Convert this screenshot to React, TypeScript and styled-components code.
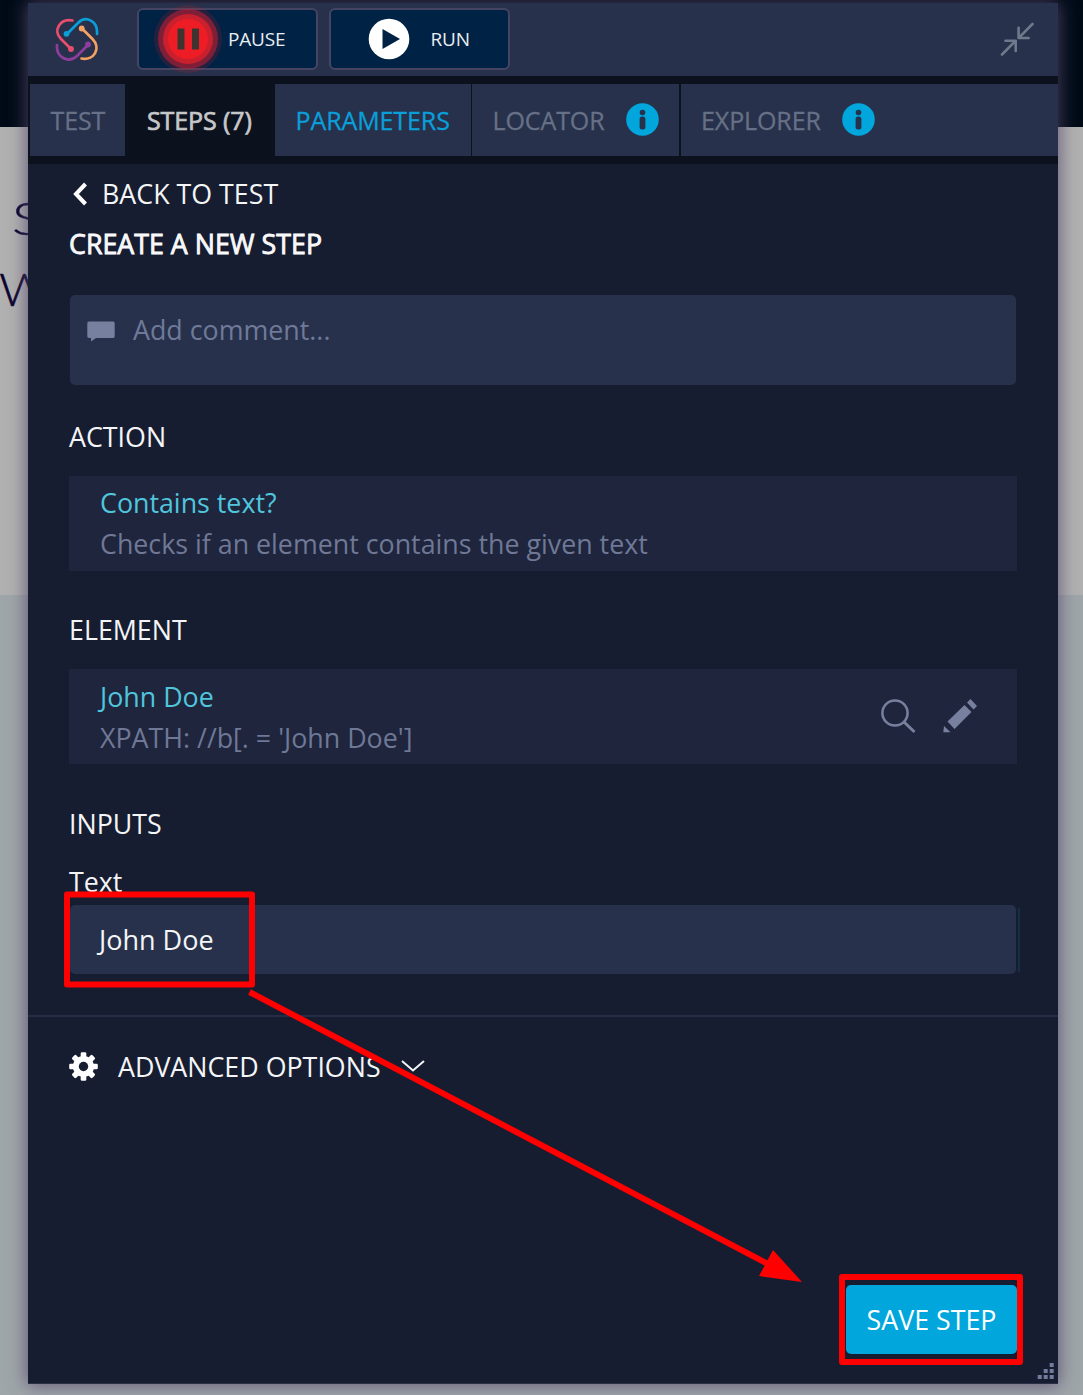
import React from "react";
import styled, { createGlobalStyle } from "styled-components";

const GlobalStyle = createGlobalStyle`
  *, *::before, *::after { box-sizing: border-box; }
  body {
    margin: 0;
    overflow: hidden;
    font-family: "Open Sans", "Noto Sans", sans-serif;
    background: #9fa6a9;
  }
  button { font-family: inherit; cursor: pointer; }
`;

const Page = styled.div`
  position: relative;
  display: grid;
  grid-template: 1395px / 1083px;
  width: 1083px;
  height: 1395px;
  overflow: hidden;
`;

const Backdrop = styled.div`
  grid-area: 1 / 1;
  display: grid;
  grid-template-rows: 127px 468px 1fr;
`;

const DarkBand = styled.div`
  background: #000b17;
`;

const GreyBand = styled.div`
  background: #b1b1b1;
  padding-top: 55px;
`;

const LowerBand = styled.div`
  background: #9fa6a9;
`;

const Headline = styled.p<{ $indent: number; $stretch: number }>`
  margin: 0 0 0 ${(p) => p.$indent}px;
  height: 71px;
  line-height: 71px;
  font-family: Lato, sans-serif;
  font-weight: 300;
  font-size: 46px;
  color: #0b0530;
  white-space: nowrap;
  -webkit-text-stroke: 0.4px #0b0530;
  transform: scaleX(${(p) => p.$stretch});
  transform-origin: left center;
`;

const Panel = styled.main`
  grid-area: 1 / 1;
  z-index: 1;
  display: flex;
  flex-direction: column;
  width: 1030px;
  height: 1381px;
  margin: 3px 0 0 28px;
  background: #171d30;
  border-bottom: 1px solid #2b3048;
  box-shadow: 0 0 17px 1px rgba(86, 70, 108, 0.85);
`;

const Header = styled.header`
  display: flex;
  align-items: center;
  height: 73px;
  flex: none;
  padding: 0 24px 2px 26px;
  background: #27314b;
`;

const LogoSlot = styled.div`
  display: flex;
  width: 46px;
  height: 46px;
  margin-right: 37px;
`;

const HeaderButton = styled.button<{ $iconPad: number; $gap: number }>`
  display: flex;
  align-items: center;
  gap: ${(p) => p.$gap}px;
  width: 181px;
  height: 62px;
  margin: 0 11px 0 0;
  padding: 0 0 0 ${(p) => p.$iconPad}px;
  border: 2px solid #454563;
  border-radius: 6px;
  background: #002244;
  color: #e9edf2;
  font-size: 19px;
  letter-spacing: -0.2px;
`;

const Collapse = styled.div`
  display: flex;
  margin-left: auto;
`;

const Tabs = styled.nav`
  display: flex;
  gap: 1.5px;
  flex: none;
  height: 88px;
  padding: 8px 0 8px 2px;
  background: #0c111e;
`;

const Tab = styled.div<{ $w?: number; $color?: string; $active?: boolean }>`
  display: flex;
  align-items: center;
  gap: 21px;
  ${(p) => (p.$w ? `width: ${p.$w}px;` : "flex: 1;")}
  padding-left: 20.5px;
  background: ${(p) => (p.$active ? "#0c111e" : "#27314b")};
  color: ${(p) => p.$color ?? "#667086"};
  font-size: 25px;
  letter-spacing: -0.1px;
  white-space: nowrap;
  -webkit-text-stroke: ${(p) => (p.$active ? 0.7 : 0.3)}px currentColor;
  svg { margin-bottom: 2px; }
`;

const Body = styled.section`
  display: flex;
  flex-direction: column;
  padding: 5px 41px 0 41px;
  height: 853px;
  flex: none;
  border-bottom: 2px solid #242d46;
`;

const Line = styled.div<{ $h: number; $mt?: number; $strong?: boolean }>`
  display: flex;
  align-items: center;
  flex: none;
  height: ${(p) => p.$h}px;
  margin-top: ${(p) => p.$mt ?? 0}px;
  font-size: 26.8px;
  line-height: ${(p) => p.$h}px;
  color: #f4f5f7;
  white-space: nowrap;
  ${(p) => p.$strong && "-webkit-text-stroke: 0.8px #fff;"}
`;

const BackIcon = styled.span`
  display: flex;
  width: 33px;
  padding-left: 4px;
`;

const Comment = styled.div`
  display: flex;
  align-items: flex-start;
  gap: 18px;
  flex: none;
  height: 90px;
  margin: 26px 1px 0 1px;
  padding: 15px 0 0 17px;
  border-radius: 5px;
  background: #27314b;
  color: #6f7a99;
  font-size: 26.8px;
  line-height: 40px;
  svg { margin-top: 11px; }
`;

const Card = styled.div`
  display: flex;
  align-items: center;
  justify-content: space-between;
  flex: none;
  height: 95px;
  margin-top: 14px;
  padding: 0 39px 0 31px;
  background: #1e253d;
`;

const CardText = styled.div<{ $nudge?: number }>`
  display: flex;
  flex-direction: column;
  padding-bottom: ${(p) => p.$nudge ?? 1}px;
`;

const CardTitle = styled.span`
  font-size: 26.8px;
  line-height: 41px;
  color: #50c5dc;
`;

const CardNote = styled.span`
  font-size: 26.8px;
  line-height: 41px;
  color: #6f7895;
`;

const CardIcons = styled.div`
  display: flex;
  gap: 26px;
  padding-bottom: 2px;
`;

const InputRow = styled.div`
  display: flex;
  align-items: center;
  gap: 2px;
  margin: 3px -3px 0 1px;
`;

const TextInput = styled.div`
  flex: 1;
  height: 69px;
  padding-left: 29px;
  border-radius: 5px;
  background: #27314b;
  color: #f4f5f7;
  font-size: 27px;
  line-height: 69px;
`;

const Caret = styled.span`
  width: 2px;
  height: 64px;
  background: #143048;
`;

const Advanced = styled.div`
  display: flex;
  align-items: center;
  height: 98px;
  flex: none;
  padding-left: 41px;
  font-size: 26.8px;
  color: #f4f5f7;
`;

const AdvancedLabel = styled.span`
  margin: 0 20px;
`;

const Footer = styled.footer`
  display: flex;
  justify-content: flex-end;
  align-items: flex-end;
  flex: 1;
  padding: 0 3px 3px 0;
`;

const SaveButton = styled.button`
  width: 171px;
  height: 69px;
  margin: 0 37px 26px 0;
  padding: 0;
  border: 0;
  border-radius: 5px;
  background: #00a6dc;
  color: #fff;
  font-size: 26.8px;
`;

const Annotations = styled.svg`
  position: absolute;
  inset: 0;
  z-index: 2;
  pointer-events: none;
`;

const Logo = () => (
  <svg width="46" height="46" viewBox="0 0 46 46" fill="none" strokeWidth="2.7" strokeLinecap="round">
    <path d="M18.5 4.5C6 2 -1.5 15 7 23L17 33" stroke="#e94f6c" />
    <path d="M13 18L24 7C32-1 44 5 43 18" stroke="#0a9fd9" />
    <path d="M28 12.5L38.500 23C47.500 32 40 45 27.500 42.500" stroke="#f4a261" />
    <path d="M34 29L23 40C14 48 2 41 3 29" stroke="#8e3d9c" />
    <circle cx="17" cy="33" r="2.900" fill="#e94f6c" />
    <circle cx="12.500" cy="17.800" r="2.900" fill="#0a9fd9" />
    <circle cx="27.700" cy="12.500" r="2.900" fill="#f4a261" />
    <circle cx="34" cy="28.500" r="2.900" fill="#8e3d9c" />
  </svg>
);

const PauseSvg = styled.svg`
  flex: none;
`;

const PauseIcon = () => (
  <PauseSvg width="68" height="68" viewBox="0 0 68 68">
    <circle cx="34" cy="34" r="34" fill="#e01c2c" opacity=".16" />
    <circle cx="34" cy="34" r="30" fill="#d71e2d" opacity=".5" />
    <circle cx="34" cy="34" r="25" fill="#c9202d" />
    <circle cx="34" cy="34" r="20" fill="#ee1c25" />
    <path d="M23.500 23.500h7v21h-7zM38 23.500h7v21h-7z" fill="#3d342f" />
  </PauseSvg>
);

const PlayIcon = () => (
  <svg width="42" height="42" viewBox="0 0 42 42">
    <circle cx="21" cy="21" r="20.300" fill="#fff" />
    <path d="M14.500 11v20L32 21z" fill="#002244" />
  </svg>
);

const InfoIcon = () => (
  <svg width="33" height="33" viewBox="0 0 33 33">
    <circle cx="16.500" cy="16.500" r="16.300" fill="#00a6dc" />
    <circle cx="16.500" cy="9.500" r="2.800" fill="#27314b" />
    <rect x="13.600" y="13.500" width="5.800" height="13" rx="2.500" fill="#27314b" />
  </svg>
);

const CollapseIcon = () => (
  <svg width="34" height="34" viewBox="0 0 34 34" fill="none" stroke="#70788b" strokeWidth="2.600" strokeLinecap="round" strokeLinejoin="round">
    <path d="M2 32.500L15.500 18.800M5.500 18.800h10.200v10.200M32.500 2L18.800 15.800M18.600 5.800V16h10" />
  </svg>
);

const SearchIcon = () => (
  <svg width="36" height="36" viewBox="0 0 36 36" fill="none" stroke="#77819f" strokeWidth="2.500">
    <circle cx="15" cy="15" r="12.600" />
    <path d="M24 24l10.500 10" strokeWidth="3" />
  </svg>
);

const PencilIcon = () => (
  <svg width="36" height="36" viewBox="0 0 36 36" fill="#77819f">
    <path d="M28.500 1l6.500 7-3.500 3.500L25 4.500zM22.500 7l7 7L12.500 31 5.500 23.500zM2 28l6.500 6.300H1.300z" />
  </svg>
);

const GearIcon = () => (
  <svg width="29" height="29" viewBox="-14.500 -14.500 29 29">
    {[0, 45, 90, 135].map((a) => (
      <rect key={a} x="-2.800" y="-14.300" width="5.600" height="28.600" rx="1.300" fill="#fff" transform={`rotate(${a})`} />
    ))}
    <circle r="10.600" fill="#fff" />
    <circle r="4.700" fill="#171d30" />
  </svg>
);

const GRIP: [number, number][] = [[12, 0], [6, 6], [12, 6], [0, 12], [6, 12], [12, 12]];

const GripSvg = styled.svg`
  flex: none;
  margin-left: -17px;
`;

const Grip = () => (
  <GripSvg width="18" height="18" viewBox="0 0 18 18">
    {GRIP.map(([x, y]) => (
      <rect key={`${x}-${y}`} x={x + 0.7} y={y + 1} width="4" height="4" fill="#717b9b" />
    ))}
  </GripSvg>
);

export default function App() {
  return (
    <>
      <GlobalStyle />
      <Page>
        <Backdrop>
          <DarkBand />
          <GreyBand>
            <Headline $indent={12} $stretch={1.24}>S</Headline>
            <Headline $indent={-1} $stretch={1.08}>W</Headline>
          </GreyBand>
          <LowerBand />
        </Backdrop>
        <Panel>
          <Header>
            <LogoSlot><Logo /></LogoSlot>
            <HeaderButton $iconPad={15} $gap={6}><PauseIcon />PAUSE</HeaderButton>
            <HeaderButton $iconPad={37} $gap={20.5}><PlayIcon />RUN</HeaderButton>
            <Collapse><CollapseIcon /></Collapse>
          </Header>
          <Tabs>
            <Tab $w={95}>TEST</Tab>
            <Tab $w={147} $active $color="#c6c7c9">STEPS (7)</Tab>
            <Tab $w={195.5} $color="#0a9fd9">PARAMETERS</Tab>
            <Tab $w={207}>LOCATOR<InfoIcon /></Tab>
            <Tab>EXPLORER<InfoIcon /></Tab>
          </Tabs>
          <Body>
            <Line $h={50}>
              <BackIcon>
                <svg width="15" height="24" viewBox="0 0 15 24" fill="none" stroke="#fff" strokeWidth="4">
                  <path d="M12.500 2L3 12l9.500 10" />
                </svg>
              </BackIcon>
              BACK TO TEST
            </Line>
            <Line $h={50} $strong>CREATE A NEW STEP</Line>
            <Comment>
              <svg width="28" height="21" viewBox="0 0 28 21" fill="#77819f">
                <path d="M2 0.500h24a1.700 1.700 0 0 1 1.700 1.700v13a1.700 1.700 0 0 1-1.700 1.700H9L4 20.500v-3.600H2a1.700 1.700 0 0 1-1.700-1.700v-13A1.700 1.700 0 0 1 2 .5z" />
              </svg>
              Add comment...
            </Comment>
            <Line $h={50} $mt={27}>ACTION</Line>
            <Card>
              <CardText>
                <CardTitle>Contains text?</CardTitle>
                <CardNote>Checks if an element contains the given text</CardNote>
              </CardText>
            </Card>
            <Line $h={50} $mt={34}>ELEMENT</Line>
            <Card>
              <CardText $nudge={0}>
                <CardTitle>John Doe</CardTitle>
                <CardNote>XPATH: //b[. = 'John Doe']</CardNote>
              </CardText>
              <CardIcons><SearchIcon /><PencilIcon /></CardIcons>
            </Card>
            <Line $h={50} $mt={35}>INPUTS</Line>
            <Line $h={40} $mt={13}>Text</Line>
            <InputRow>
              <TextInput>John Doe</TextInput>
              <Caret />
            </InputRow>
          </Body>
          <Advanced>
            <GearIcon />
            <AdvancedLabel>ADVANCED OPTIONS</AdvancedLabel>
            <svg width="24" height="14" viewBox="0 0 24 14" fill="none" stroke="#f4f5f7" strokeWidth="2">
              <path d="M1 2l11 9.500L23 2" />
            </svg>
          </Advanced>
          <Footer>
            <SaveButton>SAVE STEP</SaveButton>
            <Grip />
          </Footer>
        </Panel>
        <Annotations width="1083" height="1395" viewBox="0 0 1083 1395" fill="none" stroke="#f00" strokeWidth="6" strokeLinejoin="round">
          <rect x="67" y="894.500" width="185" height="90" />
          <rect x="842" y="1277" width="178" height="85" />
          <path d="M249.500 992L768 1264" />
          <path d="M773 1250L802 1282 759 1276z" fill="#f00" stroke="none" />
        </Annotations>
      </Page>
    </>
  );
}
